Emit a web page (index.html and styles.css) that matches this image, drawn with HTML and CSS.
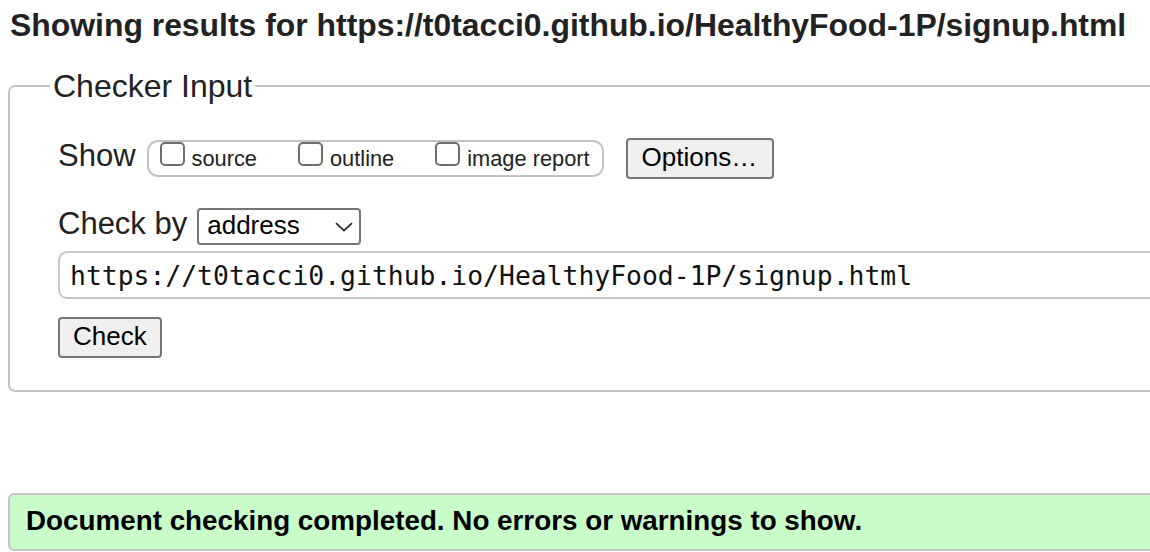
FILE: index.html
```html
<!DOCTYPE html>
<html lang="en">
<head>
<meta charset="utf-8">
<title>Showing results for https://t0tacci0.github.io/HealthyFood-1P/signup.html - Nu Html Checker</title>
<link rel="stylesheet" href="styles.css">
</head>
<body>
<h2 class="title">Showing results for https://t0tacci0.github.io/HealthyFood-1P/signup.html</h2>
<form class="checker">
  <fieldset class="input-set">
    <legend class="legend">Checker Input</legend>
    <div class="fs-body">
      <div class="row show-row">
        <span class="row-label show-label">Show</span>
        <div class="opts">
          <label class="opt"><input type="checkbox" class="cb"><span>source</span></label>
          <label class="opt"><input type="checkbox" class="cb"><span>outline</span></label>
          <label class="opt"><input type="checkbox" class="cb"><span>image report</span></label>
        </div>
        <button type="button" class="btn options-btn">Options…</button>
      </div>
      <div class="row by-row">
        <span class="row-label by-label">Check by</span>
        <span class="select-wrap">
          <select class="select"><option>address</option></select>
          <svg class="chev" width="18" height="10" viewBox="0 0 18 10"><path d="M1 1.2 L9 8.6 L17 1.2" fill="none" stroke="#222" stroke-width="1.6"/></svg>
        </span>
      </div>
      <input class="url" type="url" value="https://t0tacci0.github.io/HealthyFood-1P/signup.html">
      <div class="submit-row">
        <button type="button" class="btn check-btn">Check</button>
      </div>
    </div>
  </fieldset>
</form>
<div class="success">
  <p class="success-text">Document checking completed. No errors or warnings to show.</p>
</div>
</body>
</html>
```
FILE: styles.css
```css
html, body {
  margin: 0;
  padding: 0;
  overflow: hidden;
  background: #ffffff;
}

body {
  font-family: "Liberation Sans", Arial, sans-serif;
  color: #222222;
}

.title {
  margin: 0;
  padding: 7px 0 0 10px;
  font-size: 31.9px;
  line-height: 36px;
  font-weight: bold;
  color: #222222;
  white-space: nowrap;
}

.checker {
  margin: 25px -300px 0 8px;
}

.input-set {
  margin: 0;
  border: 2px solid #c4c4c4;
  border-radius: 7px;
  padding: 34px 0 32px 40px;
  min-width: 0;
}

.legend {
  font-size: 32px;
  line-height: 36px;
  padding: 0 3px;
  color: #222222;
}

.fs-body {
  padding-left: 8px;
}

.row {
  display: flex;
  align-items: baseline;
}

.row-label {
  font-size: 31px;
  line-height: 34px;
  color: #222222;
}

.show-label {
  margin-right: 11px;
}

.opts {
  display: flex;
  align-items: baseline;
  gap: 41px;
  border: 2px solid #c4c4c4;
  border-radius: 11px;
  height: 37px;
  box-sizing: border-box;
  padding: 0 12px 0 11px;
  line-height: 33px;
  font-size: 21.8px;
  color: #222222;
}

.opt {
  display: block;
  white-space: nowrap;
}

.cb {
  -webkit-appearance: none;
  appearance: none;
  display: inline-block;
  vertical-align: baseline;
  width: 25px;
  height: 24px;
  margin: 0 7px 0 0;
  border: 2px solid #6e6e6e;
  border-radius: 5px;
  background: #ffffff;
  box-sizing: border-box;
}

.btn {
  font-family: "Liberation Sans", Arial, sans-serif;
  font-size: 26px;
  line-height: 30px;
  color: #000000;
  background: #efefef;
  border: 2px solid #767676;
  border-radius: 4px;
  height: 41px;
  box-sizing: border-box;
  padding: 2px 14px 5px;
}

.options-btn {
  margin-left: 22px;
  padding: 2px 15px 5px 14px;
}

.by-row {
  margin-top: 28px;
}

.by-label {
  margin-right: 10px;
}

.select-wrap {
  position: relative;
  display: inline-block;
}

.select {
  -webkit-appearance: none;
  appearance: none;
  font-family: "Liberation Sans", Arial, sans-serif;
  font-size: 26px;
  line-height: 30px;
  color: #000000;
  width: 164px;
  height: 37px;
  box-sizing: border-box;
  border: 2px solid #767676;
  border-radius: 4px;
  background: #ffffff;
  padding: 0 30px 3px 8px;
  margin: 0;
}

.chev {
  position: absolute;
  right: 8px;
  top: 14px;
  pointer-events: none;
}

.url {
  display: block;
  margin: 6px 0 0 0;
  width: 1300px;
  height: 48px;
  box-sizing: border-box;
  border: 2px solid #c8c8c8;
  border-radius: 9px;
  padding: 0 10px;
  font-family: "DejaVu Sans Mono", "Liberation Mono", monospace;
  font-size: 26.4px;
  color: #111111;
  background: #ffffff;
}

.submit-row {
  margin-top: 18px;
}

.check-btn {
  padding: 2px 13px 5px;
}

.success {
  margin: 101px -300px 0 8px;
  background: #c8fcc8;
  border: 2px solid #c4c4c4;
  border-radius: 6px;
  height: 58px;
  box-sizing: border-box;
}

.success-text {
  margin: 0;
  padding: 10px 0 0 16px;
  font-size: 27.8px;
  line-height: 32px;
  font-weight: bold;
  color: #000000;
  white-space: nowrap;
}
```
